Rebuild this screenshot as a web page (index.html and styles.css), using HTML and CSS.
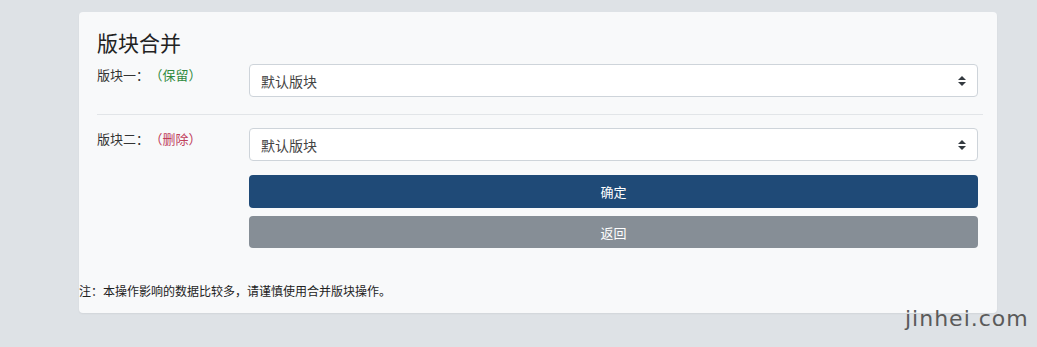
FILE: index.html
```html
<!DOCTYPE html>
<html lang="zh">
<head>
<meta charset="utf-8">
<title>版块合并</title>
<link rel="stylesheet" href="styles.css">
</head>
<body>
<div class="page">
  <div class="card">
    <h2 class="title">版块合并</h2>
    <div class="row">
      <div class="label">版块一：<span class="keep">（保留）</span></div>
      <div class="field">
        <div class="select">
          <span>默认版块</span>
          <svg class="caret" width="8" height="10" viewBox="0 0 8 10"><path d="M0 4 L4 0 L8 4 Z M0 6 L4 10 L8 6 Z" fill="#343a40"/></svg>
        </div>
      </div>
    </div>
    <div class="divider"></div>
    <div class="row second">
      <div class="label">版块二：<span class="del">（删除）</span></div>
      <div class="field">
        <div class="select">
          <span>默认版块</span>
          <svg class="caret" width="8" height="10" viewBox="0 0 8 10"><path d="M0 4 L4 0 L8 4 Z M0 6 L4 10 L8 6 Z" fill="#343a40"/></svg>
        </div>
        <div class="btn primary">确定</div>
        <div class="btn secondary">返回</div>
      </div>
    </div>
    <div class="note">注：本操作影响的数据比较多，请谨慎使用合并版块操作。</div>
  </div>
</div>
<div class="watermark">jinhei.com</div>
</body>
</html>
```

FILE: styles.css
```css
html, body {
  margin: 0;
  padding: 0;
}
body {
  background: #dee2e6;
  font-family: "Noto Sans CJK SC", "Noto Sans", sans-serif;
  color: #333;
  width: 1037px;
  height: 347px;
  overflow: hidden;
  position: relative;
}
.page {
  padding: 12px 0 0 79px;
}
.card {
  width: 918px;
  box-sizing: border-box;
  background: #f8f9fa;
  border-radius: 4px;
  box-shadow: 0 1px 2px rgba(0,0,0,0.06);
  padding: 17px 19px 0 18px;
  height: 301px;
}
.title {
  margin: 0;
  font-size: 21px;
  font-weight: 400;
  line-height: 26px;
  color: #222;
}
.row {
  display: flex;
  margin-top: 9px;
}
.row.second {
  margin-top: 13px;
}
.label {
  width: 152px;
  font-size: 13px;
  line-height: 20px;
  padding-top: 1px;
  color: #333;
}
.keep, .del {
  margin-left: 7px;
}
.keep { color: #2f8a3e; }
.del { color: #c0405a; }
.field {
  flex: 1;
  display: flex;
  flex-direction: column;
}
.select {
  height: 33px;
  box-sizing: border-box;
  border: 1px solid #ced4da;
  border-radius: 4px;
  background: #fff;
  display: flex;
  align-items: center;
  justify-content: space-between;
  padding: 0 11px 0 11px;
  font-size: 14px;
  color: #444;
}
.caret { display: block; }
.divider {
  height: 1px;
  background: #e2e5e8;
  margin: 17px -5px 0 0;
}
.btn {
  height: 33px;
  border-radius: 4px;
  color: #fff;
  font-size: 13px;
  display: flex;
  align-items: center;
  justify-content: center;
}
.primary {
  background: #1f4a77;
  margin-top: 14px;
}
.secondary {
  background: #868e96;
  margin-top: 8px;
  height: 32px;
}
.note {
  font-size: 12px;
  line-height: 16px;
  margin: 35px 0 0 -18px;
  color: #222;
}
.watermark {
  position: absolute;
  left: 905px;
  top: 306px;
  font-family: "DejaVu Sans", sans-serif;
  font-size: 22px;
  letter-spacing: 1px;
  color: #5a5a5a;
}
```
